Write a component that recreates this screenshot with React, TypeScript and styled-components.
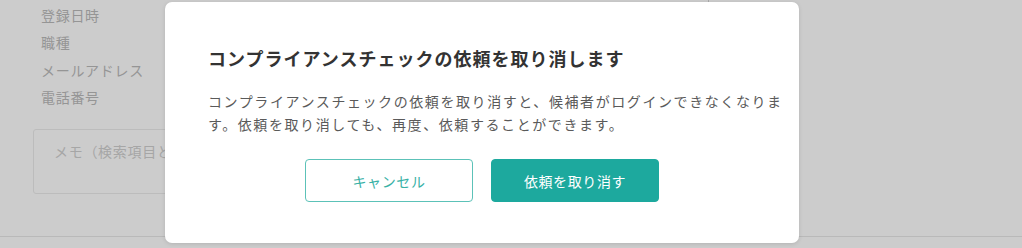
import React from "react";
import styled, { createGlobalStyle } from "styled-components";

const GlobalStyle = createGlobalStyle`
  html, body {
    margin: 0;
    padding: 0;
    width: 1022px;
    height: 248px;
    overflow: hidden;
    background: #cccccc;
    font-family: "Noto Sans CJK JP", "Noto Sans", sans-serif;
  }
`;

const Page = styled.div`
  position: relative;
  width: 1022px;
  height: 248px;
  background: #cccccc;
  overflow: hidden;
`;

const Content = styled.div`
  display: flex;
  flex-direction: column;
  height: 237px;
  box-sizing: border-box;
  padding: 2px 0 0 33px;
  border-bottom: 1px solid #b9b9b9;
`;

const Divider = styled.div`
  position: absolute;
  left: 708px;
  top: 0;
  width: 1px;
  height: 4px;
  background: #a9a9a9;
`;

const LabelList = styled.div`
  display: flex;
  flex-direction: column;
  padding-left: 8px;
`;

const Label = styled.div`
  font-size: 14px;
  line-height: 27.3px;
  letter-spacing: 0.7px;
  color: #959595;
`;

const MemoBox = styled.div`
  margin-top: 18px;
  width: 660px;
  height: 65px;
  box-sizing: border-box;
  border: 1px solid #bcbcbc;
  border-radius: 3px;
  padding: 11px 0 0 20px;
  font-size: 14px;
  line-height: 20px;
  letter-spacing: 0.7px;
  color: #a6a6a6;
`;

const Modal = styled.div`
  position: absolute;
  left: 165px;
  top: 2px;
  width: 634px;
  height: 241px;
  box-sizing: border-box;
  background: #ffffff;
  border-radius: 7px;
  box-shadow: 0 1px 4px rgba(0, 0, 0, 0.12);
  padding: 43px 0 0 43px;
  display: flex;
  flex-direction: column;
`;

const Title = styled.h2`
  margin: 0;
  font-size: 18px;
  line-height: 26px;
  font-weight: 700;
  letter-spacing: 1px;
  color: #333333;
`;

const Body = styled.p`
  margin: 19px 0 0;
  font-size: 14px;
  line-height: 23px;
  letter-spacing: 1.58px;
  color: #5a5a5a;
  white-space: nowrap;
`;

const Actions = styled.div`
  display: flex;
  justify-content: center;
  gap: 18px;
  margin: 23px 43px 0 0;
`;

const Button = styled.button<{ $primary?: boolean }>`
  width: 168px;
  height: 43px;
  box-sizing: border-box;
  border-radius: 4px;
  border: 1px solid ${(p) => (p.$primary ? "#1da99e" : "#5cc2b8")};
  background: ${(p) => (p.$primary ? "#1da99e" : "#ffffff")};
  color: ${(p) => (p.$primary ? "#ffffff" : "#38b1a6")};
  font-family: "Noto Sans CJK JP", "Noto Sans", sans-serif;
  font-size: 14px;
  letter-spacing: 0.6px;
  padding: 0;
  cursor: pointer;
`;

export default function App() {
  return (
    <>
      <GlobalStyle />
      <Page>
        <Content>
          <LabelList>
            <Label>登録日時</Label>
            <Label>職種</Label>
            <Label>メールアドレス</Label>
            <Label>電話番号</Label>
          </LabelList>
          <MemoBox>メモ（検索項目として利用できます）</MemoBox>
        </Content>
        <Divider />
        <Modal>
          <Title>コンプライアンスチェックの依頼を取り消します</Title>
          <Body>
            コンプライアンスチェックの依頼を取り消すと、候補者がログインできなくなりま
            <br />
            す。依頼を取り消しても、再度、依頼することができます。
          </Body>
          <Actions>
            <Button>キャンセル</Button>
            <Button $primary>依頼を取り消す</Button>
          </Actions>
        </Modal>
      </Page>
    </>
  );
}
